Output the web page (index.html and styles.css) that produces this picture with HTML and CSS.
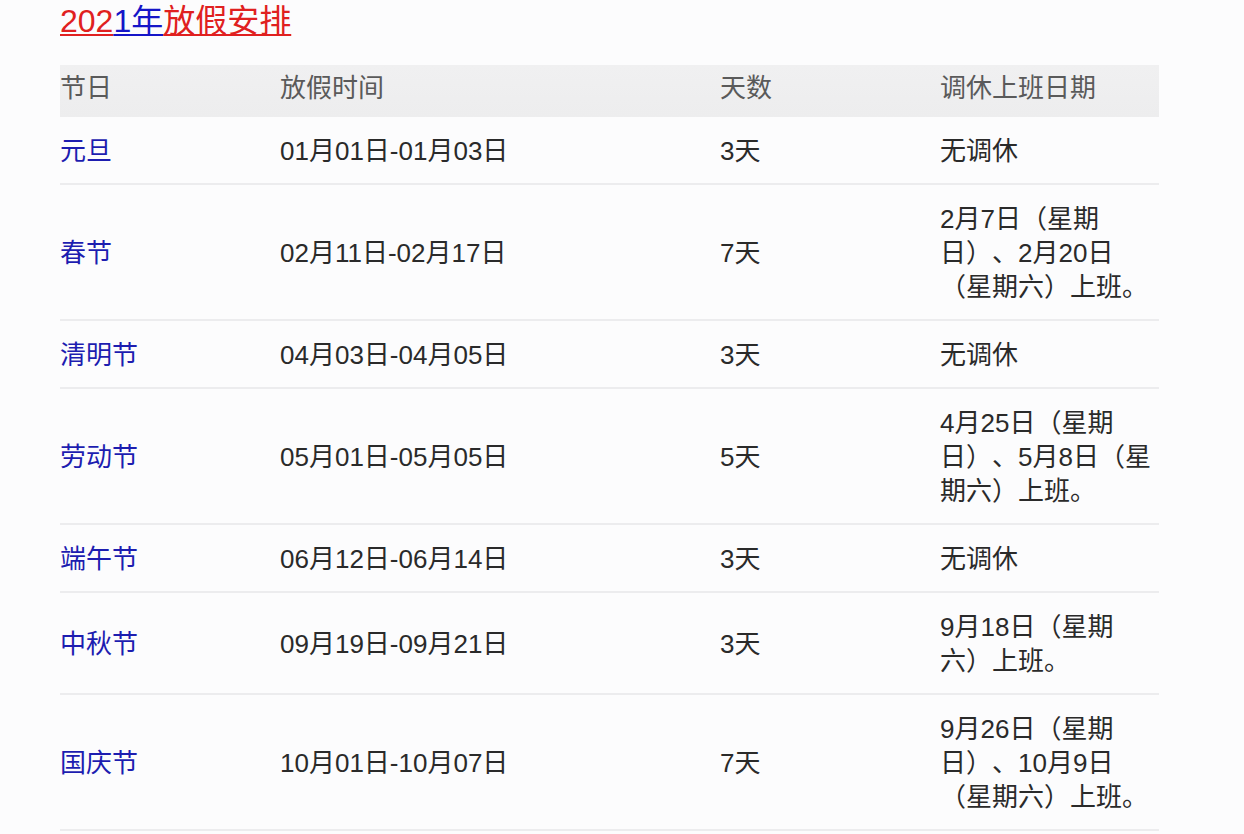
FILE: index.html
```html
<!DOCTYPE html>
<html lang="zh-CN">
<head>
<meta charset="utf-8">
<title>2021年放假安排</title>
<link rel="stylesheet" href="styles.css">
</head>
<body>
<div class="page">
  <h2 class="title"><a class="red" href="#">202</a><a class="blue" href="#">1年</a><a class="red" href="#">放假安排</a></h2>
  <table class="holidays">
    <thead>
      <tr><th>节日</th><th>放假时间</th><th>天数</th><th>调休上班日期</th></tr>
    </thead>
    <tbody>
      <tr><td><a href="#">元旦</a></td><td>01月01日-01月03日</td><td>3天</td><td>无调休</td></tr>
      <tr><td><a href="#">春节</a></td><td>02月11日-02月17日</td><td>7天</td><td>2月7日（星期日）、2月20日（星期六）上班。</td></tr>
      <tr><td><a href="#">清明节</a></td><td>04月03日-04月05日</td><td>3天</td><td>无调休</td></tr>
      <tr><td><a href="#">劳动节</a></td><td>05月01日-05月05日</td><td>5天</td><td>4月25日（星期日）、5月8日（星期六）上班。</td></tr>
      <tr><td><a href="#">端午节</a></td><td>06月12日-06月14日</td><td>3天</td><td>无调休</td></tr>
      <tr><td><a href="#">中秋节</a></td><td>09月19日-09月21日</td><td>3天</td><td>9月18日（星期六）上班。</td></tr>
      <tr><td><a href="#">国庆节</a></td><td>10月01日-10月07日</td><td>7天</td><td>9月26日（星期日）、10月9日（星期六）上班。</td></tr>
    </tbody>
  </table>
</div>
</body>
</html>
```

FILE: styles.css
```css
html, body {
  margin: 0;
  padding: 0;
  background: #fcfcfd;
}
body {
  font-family: "Liberation Sans", "Noto Sans CJK SC", sans-serif;
  font-weight: 400;
  color: #333;
  text-spacing-trim: space-all;
}
.page {
  padding: 0 0 0 60px;
  width: 1099px;
}
.title {
  margin: 0;
  padding-top: 1px;
  height: 64px;
  font-size: 32px;
  font-weight: 400;
  line-height: 40px;
}
.title a {
  text-decoration: underline;
  text-underline-offset: 2px;
  text-decoration-thickness: 2px;
}
.title .red { color: #e02020; }
.title .blue { color: #1515c8; }
.holidays {
  width: 1099px;
  border-collapse: collapse;
  table-layout: fixed;
  font-size: 26px;
  line-height: 34px;
}
.holidays th:nth-child(1), .holidays td:nth-child(1) { width: 220px; }
.holidays th:nth-child(2), .holidays td:nth-child(2) { width: 440px; }
.holidays th:nth-child(3), .holidays td:nth-child(3) { width: 220px; }
.holidays th:nth-child(4), .holidays td:nth-child(4) { width: 219px; }
.holidays thead tr {
  background: linear-gradient(#f0f0f1, #ededee);
}
.holidays th {
  height: 46px;
  padding: 0 0 6px;
  text-align: left;
  font-weight: 400;
  color: #5a5a5a;
}
.holidays td {
  padding: 17px 0 15px;
  border-bottom: 2px solid #ececee;
  vertical-align: middle;
  color: #2a2a2a;
}
.holidays td a {
  color: #1d1db0;
  text-decoration: none;
}
```
